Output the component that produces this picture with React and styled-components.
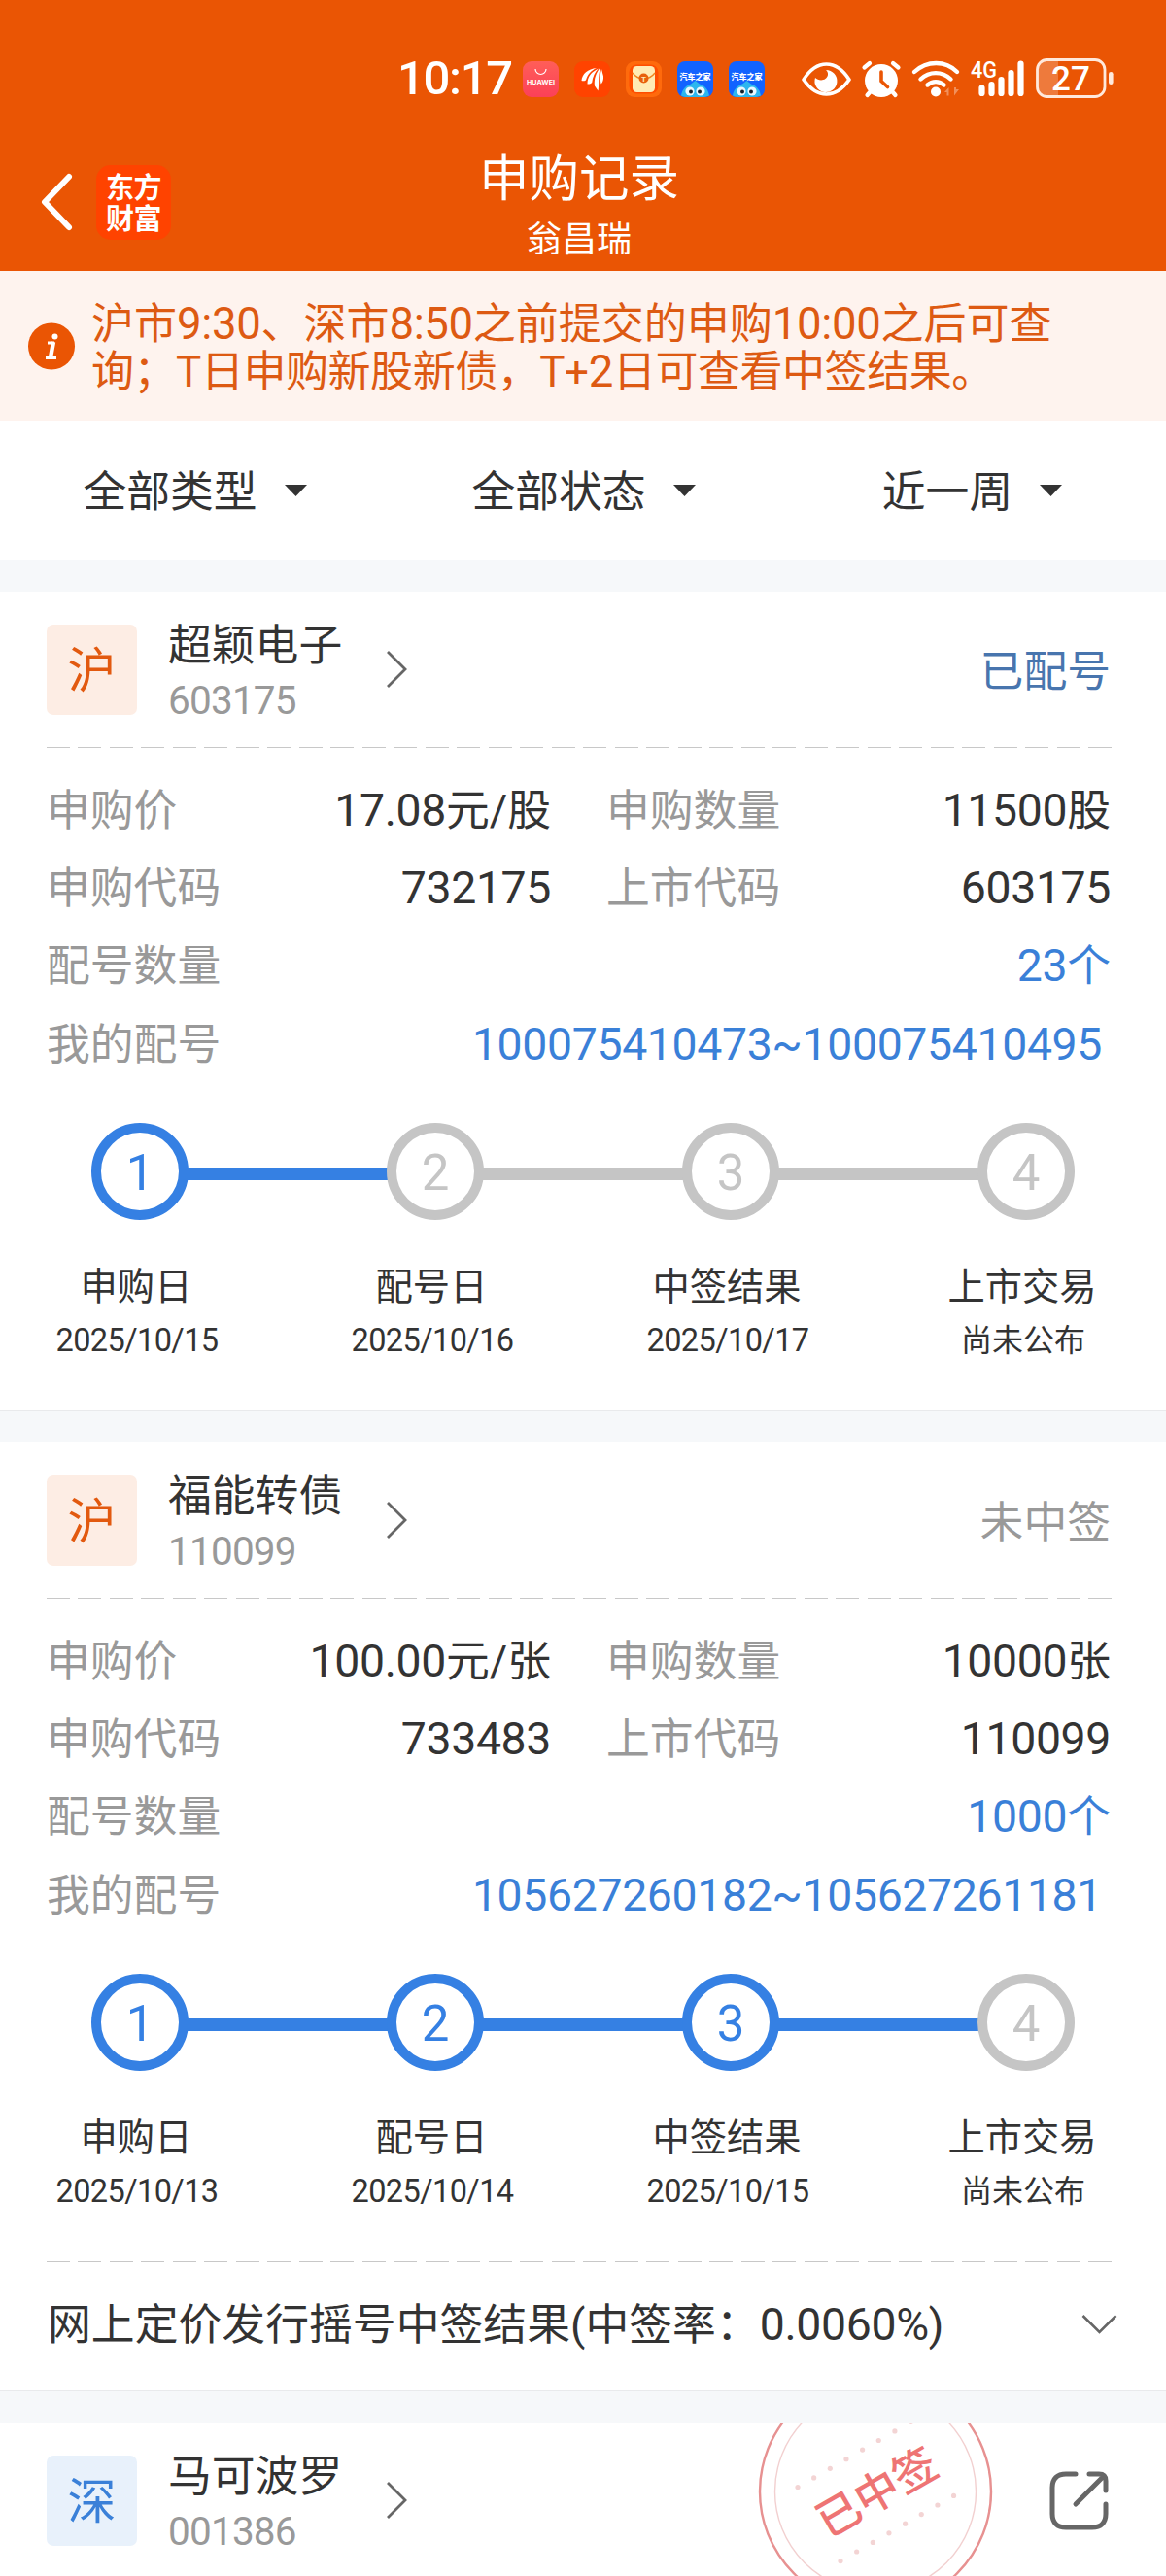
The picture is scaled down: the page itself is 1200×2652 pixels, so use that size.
import React from "react";
import styled, { createGlobalStyle } from "styled-components";

const GlobalStyle = createGlobalStyle`
  * { box-sizing: border-box; }
  body {
    margin: 0;
    background: #fff;
    font-family: Roboto, "Noto Sans CJK SC", sans-serif;
    color: #333;
  }
  svg { display: block; flex: none; }
`;

const Page = styled.div`
  width: 1200px;
  height: 2652px;
  overflow: hidden;
  background: #f6f8fa;
`;

/* ---------- text ---------- */

const Digits = styled.span`
  font-size: 1.035em;
  line-height: 1;
  letter-spacing: -0.35px;
`;

function Mixed({ children }) {
  return children
    .split(/([0-9][0-9.:~%]*)/)
    .map((part, i) => (i % 2 ? <Digits key={i}>{part}</Digits> : part));
}

/* ---------- header ---------- */

const Header = styled.header`
  height: 279px;
  background: #ea5504;
  color: #fff;
`;

const StatusBar = styled.div`
  display: flex;
  align-items: center;
  height: 140px;
  padding: 22px 53px 0 409px;
`;

const Clock = styled.div`
  width: 129px;
  font-size: 49px;
  line-height: 56px;
  letter-spacing: -1.3px;
  font-weight: 500;
`;

const AppIcons = styled.div`
  display: flex;
  gap: 16px;
`;

const SystemIcons = styled.div`
  display: flex;
  align-items: center;
  margin-left: auto;
`;

const NavBar = styled.div`
  display: grid;
  grid-template-columns: 176px 840px 184px;
  height: 139px;
`;

const NavLeft = styled.div`
  display: flex;
  align-items: center;
  gap: 23px;
  height: 136px;
  padding-left: 41px;
`;

const BrandLogo = styled.div`
  width: 77px;
  height: 77px;
  flex: none;
  border-radius: 15px;
  background: #ff4300;
  padding-top: 5px;
  text-align: center;
  font-family: "Noto Sans CJK SC", sans-serif;
  font-size: 29px;
  line-height: 32px;
  font-weight: 700;
  letter-spacing: -0.5px;
`;

const NavTitle = styled.div`
  text-align: center;
  padding-top: 14px;
`;

const Title = styled.div`
  font-size: 51.5px;
  line-height: 62px;
`;

const UserName = styled.div`
  font-size: 36px;
  line-height: 62px;
`;

const Notice = styled.div`
  display: flex;
  align-items: center;
  height: 154px;
  padding: 0 80px 0 29px;
  gap: 16px;
  background: #fef3ee;
  color: #dd5a12;
  font-size: 44px;
  line-height: 49px;
  white-space: nowrap;
`;

const NoticeText = styled.div`
  padding-top: 5px;
`;

const NoticeLine = styled.div`
  letter-spacing: ${(p) => p.$track}px;
`;

/* ---------- filters ---------- */

const Filters = styled.div`
  display: grid;
  grid-template-columns: repeat(3, 1fr);
  height: 144px;
  margin-bottom: 32px;
  background: #fff;
`;

const Filter = styled.div`
  display: flex;
  align-items: center;
  justify-content: center;
  gap: 28px;
  font-size: 44.8px;
  line-height: 60px;
`;

const FilterLabel = styled.span`
  padding: 3px 0 0 1px;
`;

/* ---------- card ---------- */

const Card = styled.section`
  background: #fff;
  margin-bottom: 32px;
  border-bottom: 1px solid #e9eaec;
`;

const CardHead = styled.div`
  display: flex;
  align-items: center;
  height: 160px;
  padding: 0 57px 0 48px;
`;

const Market = styled.div`
  width: 93px;
  height: 93px;
  flex: none;
  border-radius: 7px;
  background: ${(p) => (p.$blue ? "#e8f1fb" : "#fdede4")};
  color: ${(p) => (p.$blue ? "#3a80d8" : "#e2590f")};
  font-size: 50px;
  line-height: 96px;
  text-align: center;
`;

const StockName = styled.div`
  width: 224px;
  margin-left: 32px;
  padding-top: 3px;
  font-size: 44.8px;
  line-height: 60px;
`;

const StockCode = styled.div`
  color: #999;
  font-size: 40.5px;
  line-height: 52px;
  letter-spacing: -0.8px;
`;

const Status = styled.div`
  margin-left: auto;
  padding-top: 5px;
  font-size: 44.8px;
  line-height: 60px;
  color: ${(p) => (p.$muted ? "#999" : "#4875ae")};
`;

const HeadTools = styled.div`
  display: flex;
  align-items: center;
  align-self: flex-start;
  gap: 58px;
  margin: 0 2px 0 auto;
  height: 160px;
`;

const Dashes = styled.div`
  height: 1px;
  margin: 0 56px 0 48px;
  background: repeating-linear-gradient(90deg, #c8c8c8 0 24px, transparent 24px 32.485px);
`;

const Details = styled.dl`
  margin: 0;
  padding: 25px 57px 0 48px;
  font-size: 44.8px;
`;

const DetailRow = styled.div`
  display: grid;
  grid-template-columns: ${(p) => (p.$wide ? "1fr auto" : "519px 519px")};
  column-gap: 57px;
  height: ${(p) => (p.$tall ? 82 : 80)}px;
  align-items: center;
  line-height: 60px;
  padding-right: ${(p) => (p.$tall ? 9 : 0)}px;
`;

const Pair = styled.div`
  display: flex;
  justify-content: space-between;
`;

const Term = styled.dt`
  color: #999;
`;

const Value = styled.dd`
  margin: 0;
  color: ${(p) => (p.$link ? "#3a80d8" : "#333")};
`;

const Track = styled.div`
  display: flex;
  align-items: center;
  margin-top: 39px;
  padding-left: 94px;
`;

const Node = styled.div`
  width: 100px;
  height: 100px;
  flex: none;
  border: 10px solid ${(p) => (p.$on ? "#3580e3" : "#c5c5c5")};
  border-radius: 50%;
  color: ${(p) => (p.$on ? "#3580e3" : "#c5c5c5")};
  font-size: 51px;
  line-height: 84px;
  text-align: center;
`;

const Link = styled.div`
  width: 208px;
  height: 13px;
  flex: none;
  margin: 4px -2px 0;
  background: ${(p) => (p.$on ? "#3580e3" : "#c5c5c5")};
`;

const Captions = styled.div`
  display: grid;
  grid-template-columns: repeat(4, 200px);
  column-gap: 104px;
  padding: 42px 0 0 40px;
  text-align: center;
  white-space: nowrap;
`;

const StepName = styled.div`
  font-size: 38.3px;
  line-height: 54px;
`;

const StepDate = styled.div`
  font-size: ${(p) => (p.$plain ? 32 : 32.5)}px;
  line-height: 56px;
  padding-left: 2px;
  letter-spacing: ${(p) => (p.$plain ? 0 : -0.6)}px;
`;

const Spacer = styled.div`
  height: ${(p) => p.$h}px;
`;

const ResultRow = styled.div`
  display: flex;
  align-items: center;
  justify-content: space-between;
  height: 132px;
  padding: 0 50px 4px 49px;
  font-size: 44.8px;
  line-height: 60px;
`;

const ResultText = styled.span`
  padding-top: 2px;
  letter-spacing: 0.04px;
`;

/* ---------- icons ---------- */

const BackIcon = () => (
  <svg width="35" height="62" viewBox="0 0 35 62" fill="none" stroke="#fff" strokeWidth="6" strokeLinecap="round" strokeLinejoin="round">
    <path d="M30 5 5 31l25 26" />
  </svg>
);

const InfoIcon = () => (
  <svg width="49" height="49" viewBox="0 0 49 49">
    <circle cx="24" cy="24.5" r="24" fill="#ea5504" />
    <circle cx="27.5" cy="14.5" r="3" fill="#fff" />
    <path d="M20 21h7M18 36.500h11" fill="none" stroke="#fff" strokeWidth="2.800" />
    <path d="m26 20-3 16" stroke="#fff" strokeWidth="4.400" />
  </svg>
);

const Triangle = () => (
  <svg width="23" height="12" viewBox="0 0 23 12">
    <path d="M0 0h23L11.500 12z" fill="#333" />
  </svg>
);

const ChevronRight = () => (
  <svg width="24" height="40" viewBox="0 0 24 40" fill="none" stroke="#666" strokeWidth="2.800">
    <path d="m2 2 18 18L2 38" />
  </svg>
);

const ChevronDown = () => (
  <svg width="37" height="22" viewBox="0 0 37 22" fill="none" stroke="#666" strokeWidth="2.600">
    <path d="m1.500 2 17 17 17-17" />
  </svg>
);

const OpenIcon = () => (
  <svg width="61" height="61" viewBox="0 0 61 61" fill="none" stroke="#666" strokeWidth="5" strokeLinecap="round" strokeLinejoin="round">
    <path d="M27 3H17C8 3 3 8 3 17v27c0 9 5 14 14 14h27c9 0 14-5 14-14V34" />
    <path d="M41 3h10c5 0 7 2 7 7v10M27 34 56 5" />
  </svg>
);

const HuaweiApp = () => (
  <svg width="37" height="37" viewBox="0 0 37 37">
    <defs>
      <linearGradient id="hw" x2="0" y2="1">
        <stop stopColor="#ff5e58" />
        <stop offset="1" stopColor="#fb4058" />
      </linearGradient>
    </defs>
    <rect width="37" height="37" rx="9" fill="url(#hw)" />
    <path d="M13 8a5.500 5.500 0 0 0 11 0" fill="none" stroke="#fff" strokeWidth="1.200" />
    <text x="18.500" y="23.500" textAnchor="middle" textLength="29" lengthAdjust="spacingAndGlyphs" fontFamily="Inter, sans-serif" fontWeight="700" fontSize="6.800" fill="#fff">HUAWEI</text>
  </svg>
);

const WingApp = () => (
  <svg width="37" height="37" viewBox="0 0 37 37">
    <rect width="37" height="37" rx="9" fill="#ff4300" />
    <g fill="#fff">
      <path d="M23 7C14 8 8 13 7.500 20c1.500.6 3 .3 4.500-.6C14 13.500 17 9.500 23 7z" />
      <path d="M25 7.500c-7.500 3.500-11.500 8.500-11.500 16 1.600.4 3.200-.2 4.700-1.500C19 16 21 11.500 25 7.500z" />
      <path d="M27 6c-4.500 6-7 12-6 19.500l3.500 5C26 24 24 16 27 6z" />
      <path d="M28 8c-1.500 6-1.500 10-.5 15.500 2-2 2.700-4.500 2.500-8z" />
    </g>
  </svg>
);

const EnvelopeApp = () => (
  <svg width="37" height="37" viewBox="0 0 37 37">
    <rect width="37" height="37" rx="9" fill="#ff6a0c" />
    <rect x="3.500" y="3.500" width="30" height="30" rx="8" fill="#ff4d00" />
    <rect x="7" y="5" width="23" height="27" rx="4.500" fill="#ffebb5" />
    <path d="M7 12c3 4 7 6 11.500 6S27 16 30 12" fill="none" stroke="#f0841e" strokeWidth="1.300" />
    <circle cx="18.500" cy="17.500" r="5" fill="#e8600c" />
    <text x="18.500" y="20.500" textAnchor="middle" fontFamily="Roboto, sans-serif" fontWeight="700" fontSize="8" fill="#ffebb5">T</text>
  </svg>
);

const AutoApp = () => (
  <svg width="37" height="37" viewBox="0 0 37 37">
    <rect width="37" height="37" rx="8" fill="#1263ff" />
    <path d="M4 35.500C5 29 9 25 14 23.500l4.500-3.500 4.500 3.500C28 25 32 29 33 35.500 30 37 28 37 26 37H11c-3 0-5 0-7-1.500z" fill="#2cb6ee" />
    <circle cx="13" cy="31" r="4.600" fill="#e8f8ff" />
    <circle cx="24" cy="31" r="4.600" fill="#e8f8ff" />
    <circle cx="14" cy="31.500" r="2" fill="#14202c" />
    <circle cx="23" cy="31.500" r="2" fill="#14202c" />
    <text x="18.500" y="18.500" textAnchor="middle" fontFamily="Noto Sans CJK SC, sans-serif" fontWeight="900" fontSize="8" fill="#fff">汽车之家</text>
  </svg>
);

const StatusGlyphs = () => (
  <svg width="322" height="46" viewBox="825 57 322 46">
    <path d="M827 81c7-11 15-16 23.500-16S867 70 874 81c-7 10-15 15-23.500 15S834 91 827 81z" fill="none" stroke="#fff" strokeWidth="3.600" strokeLinejoin="round" />
    <path d="M850 71a11.500 11.500 0 1 1-11 8c4 4 12 3 13-3 .2-2-.5-4-2-5z" fill="#fff" />
    <circle cx="907" cy="82" r="17" fill="#fff" />
    <g stroke="#fff" strokeWidth="4.200" strokeLinecap="round" fill="none">
      <path d="m889.500 68.500 5.500-4.500M924.500 68.500 919 64M896 93l-3.500 4M918 93l3.500 4" />
    </g>
    <path d="M907 73v9.500l6.500 6" fill="none" stroke="#ea5504" strokeWidth="3.600" strokeLinecap="round" />
    <g stroke="#fff" strokeWidth="4.400" strokeLinecap="round" fill="none">
      <path d="M941 73c13-12 32-12 44 0" />
      <path d="M947.500 80.500c9-8.500 22-8.500 31 0" />
      <path d="M954.500 86.500c5-4.500 12-4.500 17 0" />
    </g>
    <circle cx="963" cy="93.500" r="5" fill="#fff" />
    <path d="M972 94l4.500-5v8.500h-2V94zM987 91l-5 6.500V89h2v2z" fill="#fff" opacity=".35" />
    <g stroke="#fff" strokeWidth="6.200" strokeLinecap="round">
      <path d="M1010.500 89.500v5.500M1020.500 86v9M1030.500 81v14M1040.500 74v21M1050.500 64.500V95" />
    </g>
    <text x="999" y="79" fontFamily="Roboto, sans-serif" fontWeight="500" fontSize="24" textLength="27" lengthAdjust="spacingAndGlyphs" fill="#fff">4G</text>
    <path d="M1078 60h11v39h-11q-10-1-10-10V70q0-9 10-10z" fill="#ee7a3c" />
    <rect x="1067.500" y="60.500" width="69.500" height="38" rx="10" fill="none" stroke="#ffe9dc" strokeWidth="2.800" />
    <rect x="1141" y="73" width="4.600" height="13" rx="2.300" fill="#ffe9dc" />
    <text x="1102" y="92" textAnchor="middle" fontFamily="Roboto, sans-serif" fontWeight="500" fontSize="35" fill="#fff">27</text>
  </svg>
);

const dotRow = (x, y) =>
  Array.from({ length: 8 }, (_, i) => <circle key={`${x}-${i}`} cx={x + i * 16.65} cy={y - i * 9.600} r="2.600" />);

const WinStamp = () => (
  <svg width="242" height="160" viewBox="780 2494 242 160" fill="none">
    <circle cx="901" cy="2565" r="119" stroke="#e79191" strokeWidth="2.400" />
    <circle cx="901" cy="2565" r="103.500" stroke="#f2d0d0" strokeWidth="1.400" />
    <g fill="#f3d4d4">
      {dotRow(821, 2560.500)}
      {dotRow(865, 2636.600)}
    </g>
    <text x="902" y="2582" transform="rotate(-30 902 2565)" textAnchor="middle" fontFamily="Noto Sans CJK SC, sans-serif" fontWeight="500" fontSize="45" fill="#ee7474">已中签</text>
  </svg>
);

/* ---------- composition ---------- */

function StockHead({ market, blue, name, code, children }) {
  return (
    <CardHead>
      <Market $blue={blue}>{market}</Market>
      <StockName>
        {name}
        <StockCode>{code}</StockCode>
      </StockName>
      <ChevronRight />
      {children}
    </CardHead>
  );
}

function Field({ label, children, link }) {
  return (
    <Pair>
      <Term>{label}</Term>
      <Value $link={link}><Mixed>{children}</Mixed></Value>
    </Pair>
  );
}

function Progress({ steps, done }) {
  return (
    <>
      <Track>
        {steps.map(([name], i) => (
          <React.Fragment key={name}>
            {i > 0 && <Link $on={i <= done} />}
            <Node $on={i < done}>{i + 1}</Node>
          </React.Fragment>
        ))}
      </Track>
      <Captions>
        {steps.map(([name, date]) => (
          <div key={name}>
            <StepName>{name}</StepName>
            <StepDate $plain={!/\d/.test(date)}>{date}</StepDate>
          </div>
        ))}
      </Captions>
    </>
  );
}

function RecordCard({ record, children }) {
  return (
    <Card>
      <StockHead market="沪" name={record.name} code={record.code}>
        <Status $muted={record.muted}>{record.status}</Status>
      </StockHead>
      <Dashes />
      <Details>
        <DetailRow>
          <Field label="申购价">{record.price}</Field>
          <Field label="申购数量">{record.amount}</Field>
        </DetailRow>
        <DetailRow>
          <Field label="申购代码">{record.applyCode}</Field>
          <Field label="上市代码">{record.code}</Field>
        </DetailRow>
        <DetailRow $wide>
          <Term>配号数量</Term>
          <Value $link><Mixed>{record.count}</Mixed></Value>
        </DetailRow>
        <DetailRow $wide $tall>
          <Term>我的配号</Term>
          <Value $link><Mixed>{record.range}</Mixed></Value>
        </DetailRow>
      </Details>
      <Progress steps={record.steps} done={record.done} />
      {children}
    </Card>
  );
}

const records = [
  {
    name: "超颖电子", code: "603175", status: "已配号", price: "17.08元/股", amount: "11500股",
    applyCode: "732175", count: "23个", range: "100075410473~100075410495", done: 1,
    steps: [["申购日", "2025/10/15"], ["配号日", "2025/10/16"], ["中签结果", "2025/10/17"], ["上市交易", "尚未公布"]],
  },
  {
    name: "福能转债", code: "110099", status: "未中签", muted: true, price: "100.00元/张", amount: "10000张",
    applyCode: "733483", count: "1000个", range: "105627260182~105627261181", done: 3,
    steps: [["申购日", "2025/10/13"], ["配号日", "2025/10/14"], ["中签结果", "2025/10/15"], ["上市交易", "尚未公布"]],
  },
];

export default function App() {
  return (
    <Page lang="zh-CN">
      <GlobalStyle />
      <Header>
        <StatusBar>
          <Clock>10:17</Clock>
          <AppIcons>
            <HuaweiApp />
            <WingApp />
            <EnvelopeApp />
            <AutoApp />
            <AutoApp />
          </AppIcons>
          <SystemIcons><StatusGlyphs /></SystemIcons>
        </StatusBar>
        <NavBar>
          <NavLeft>
            <BackIcon />
            <BrandLogo>东方<br />财富</BrandLogo>
          </NavLeft>
          <NavTitle>
            <Title>申购记录</Title>
            <UserName>翁昌瑞</UserName>
          </NavTitle>
        </NavBar>
      </Header>
      <Notice>
        <InfoIcon />
        <NoticeText>
          <NoticeLine $track={0}>
            <Mixed>沪市9:30、深市8:50之前提交的申购10:00之后可查</Mixed>
          </NoticeLine>
          <NoticeLine $track={-0.45}>
            <Mixed>询；T日申购新股新债，T+2日可查看中签结果。</Mixed>
          </NoticeLine>
        </NoticeText>
      </Notice>
      <Filters>
        {["全部类型", "全部状态", "近一周"].map((label) => (
          <Filter key={label}>
            <FilterLabel>{label}</FilterLabel>
            <Triangle />
          </Filter>
        ))}
      </Filters>
      <RecordCard record={records[0]}>
        <Spacer $h={44} />
      </RecordCard>
      <RecordCard record={records[1]}>
        <Spacer $h={44} />
        <Dashes />
        <ResultRow>
          <ResultText><Mixed>网上定价发行摇号中签结果(中签率：0.0060%)</Mixed></ResultText>
          <ChevronDown />
        </ResultRow>
      </RecordCard>
      <Card>
        <StockHead market="深" blue name="马可波罗" code="001386">
          <HeadTools>
            <WinStamp />
            <OpenIcon />
          </HeadTools>
        </StockHead>
      </Card>
    </Page>
  );
}
